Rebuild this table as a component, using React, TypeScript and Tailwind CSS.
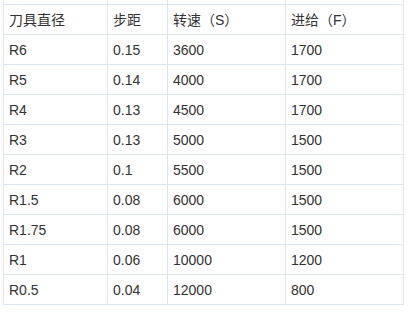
import React from 'react';

const header = ['刀具直径', '步距', '转速（S）', '进给（F）'];

const rows: string[][] = [
    ['R6', '0.15', '3600', '1700'],
    ['R5', '0.14', '4000', '1700'],
    ['R4', '0.13', '4500', '1700'],
    ['R3', '0.13', '5000', '1500'],
    ['R2', '0.1', '5500', '1500'],
    ['R1.5', '0.08', '6000', '1500'],
    ['R1.75', '0.08', '6000', '1500'],
    ['R1', '0.06', '10000', '1200'],
    ['R0.5', '0.04', '12000', '800'],
];

export default function App() {
    return (
        <div className="w-[411px] h-[319px] bg-white overflow-hidden text-[14px] text-[#333333] [font-family:'Liberation_Sans','Noto_Sans_CJK_SC',sans-serif]">
            {/* table is clipped at the top: only the tail of the previous row shows */}
            <div className="ml-[3px] w-[401px] grid grid-cols-[103px_59px_117px_117px] gap-px px-px pb-px bg-[#dde6f0]">
                {header.map((_, i) => (
                    <div key={`top-${i}`} className="h-[4px] bg-white" />
                ))}
                {[header, ...rows].map((r, ri) =>
                    r.map((c, ci) => (
                        <div key={`${ri}-${ci}`} className="h-[29px] bg-white pl-[5px] flex items-center leading-none">
                            {c}
                        </div>
                    ))
                )}
            </div>
        </div>
    );
}
